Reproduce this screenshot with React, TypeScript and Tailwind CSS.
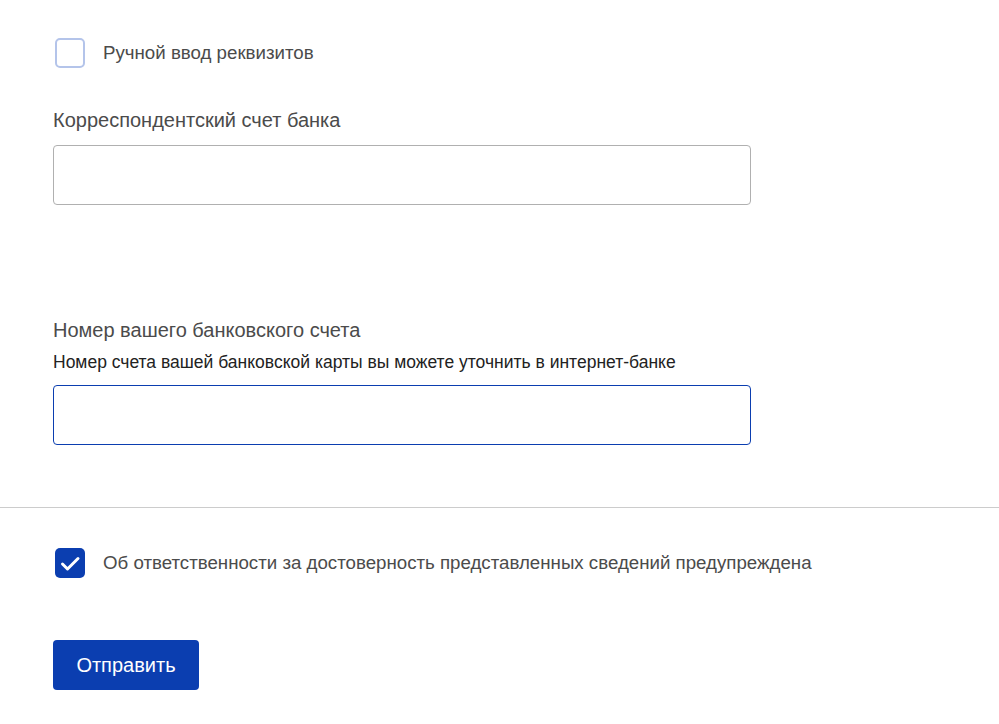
import React from "react";

export default function App() {
  const font = { fontFamily: '"Liberation Sans", Arial, sans-serif' };
  return (
    <div className="min-h-screen w-full bg-white" style={font}>
      <div className="px-[53px] pt-[38px] pb-[62px]">
        <label className="flex items-center gap-[18px] pl-[2px]">
          <span className="block h-[30px] w-[30px] rounded-[5px] border-2 border-[#b4c4ea] bg-white" />
          <span className="text-[18.7px] leading-[24px] text-[#4b4b4b]">Ручной ввод реквизитов</span>
        </label>

        <div className="mt-[40px] text-[20px] leading-[24px] text-[#4b4b4b]">Корреспондентский счет банка</div>
        <input
          className="mt-[13px] block h-[60px] w-[698px] rounded-[4px] border border-[#b0b0b0] bg-white px-4 text-[18px] outline-none"
          type="text"
        />

        <div className="mt-[113px] text-[20px] leading-[24px] text-[#4b4b4b]">Номер вашего банковского счета</div>
        <div className="mt-[10px] text-[17.5px] leading-[20px] text-[#222222]">
          Номер счета вашей банковской карты вы можете уточнить в интернет-банке
        </div>
        <input
          className="mt-[13px] block h-[60px] w-[698px] rounded-[4px] border border-[#0b3eb0] bg-white px-4 text-[18px] outline-none"
          type="text"
        />
      </div>

      <div className="h-px w-full bg-[#cccccc]" />

      <div className="px-[53px] pt-[40px]">
        <label className="flex items-center gap-[18px] pl-[2px]">
          <span className="flex h-[30px] w-[30px] items-center justify-center rounded-[5px] bg-[#0b3eb0]">
            <svg width="30" height="30" viewBox="0 0 30 30" fill="none">
              <path d="M7.5 16 L12.5 21 L23 10.5" stroke="white" strokeWidth="3" strokeLinecap="round" strokeLinejoin="round" />
            </svg>
          </span>
          <span className="text-[18.7px] leading-[24px] text-[#4b4b4b]">
            Об ответственности за достоверность представленных сведений предупреждена
          </span>
        </label>

        <button className="mt-[62px] h-[50px] w-[146px] rounded-[4px] bg-[#0b3eb0] text-[20px] text-white">
          Отправить
        </button>
      </div>
    </div>
  );
}
